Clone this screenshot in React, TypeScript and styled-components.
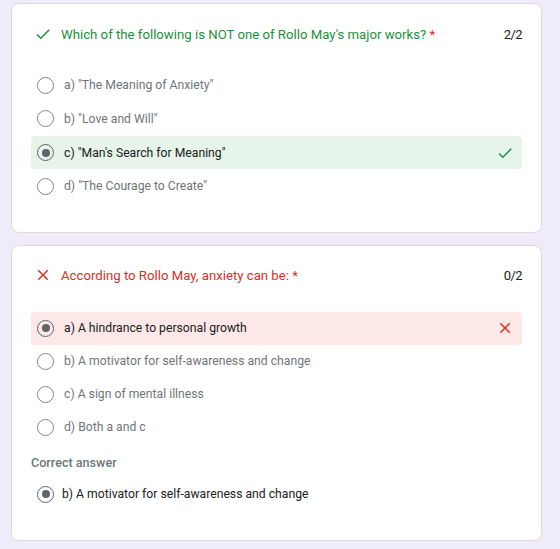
import styled, { createGlobalStyle } from "styled-components";

interface Option {
    label: string;
    chosen?: boolean;
}

interface Question {
    title: string;
    score: string;
    correct: boolean;
    options: Option[];
    answer?: string;
}

const questions: Question[] = [
    {
        title: "Which of the following is NOT one of Rollo May's major works?",
        score: "2/2",
        correct: true,
        options: [
            { label: 'a) "The Meaning of Anxiety"' },
            { label: 'b) "Love and Will"' },
            { label: 'c) "Man\'s Search for Meaning"', chosen: true },
            { label: 'd) "The Courage to Create"' },
        ],
    },
    {
        title: "According to Rollo May, anxiety can be:",
        score: "0/2",
        correct: false,
        options: [
            { label: "a) A hindrance to personal growth", chosen: true },
            { label: "b) A motivator for self-awareness and change" },
            { label: "c) A sign of mental illness" },
            { label: "d) Both a and c" },
        ],
        answer: "b) A motivator for self-awareness and change",
    },
];

const GREEN = "#1e8e3e";
const RED = "#d93025";

function CheckIcon({ size = 18 }: { size?: number }) {
    return (
        <svg width={size} height={size} viewBox="0 0 24 24">
            <path
                d="M9 16.17 4.83 12l-1.42 1.41L9 19 21 7l-1.41-1.41z"
                fill={GREEN}
            />
        </svg>
    );
}

function CrossIcon({ size = 18 }: { size?: number }) {
    return (
        <svg width={size} height={size} viewBox="0 0 24 24">
            <path
                d="M19 6.41 17.59 5 12 10.59 6.41 5 5 6.41 10.59 12 5 17.59 6.41 19 12 13.41 17.59 19 19 17.59 13.41 12z"
                fill={RED}
            />
        </svg>
    );
}

function App() {
    return (
        <>
            <GlobalStyle />
            <Page>
                {questions.map((q) => (
                    <Card key={q.title} $top={q.correct ? 20 : 19}>
                        <Header $space={q.correct ? 24.5 : 26.5}>
                            <HeaderIcon>
                                {q.correct ? <CheckIcon /> : <CrossIcon />}
                            </HeaderIcon>
                            <Title $correct={q.correct}>
                                {q.title} <Required>*</Required>
                            </Title>
                            <Score>{q.score}</Score>
                        </Header>
                        <OptionList $gap={q.correct ? 0.75 : 0}>
                            {q.options.map((o) => (
                                <Row
                                    key={o.label}
                                    $tone={
                                        o.chosen
                                            ? q.correct
                                                ? "good"
                                                : "bad"
                                            : undefined
                                    }
                                >
                                    <Radio $on={o.chosen} />
                                    <OptionText $on={o.chosen}>
                                        {o.label}
                                    </OptionText>
                                    {o.chosen && (
                                        <RowMark>
                                            {q.correct ? (
                                                <CheckIcon />
                                            ) : (
                                                <CrossIcon />
                                            )}
                                        </RowMark>
                                    )}
                                </Row>
                            ))}
                        </OptionList>
                        {q.answer && (
                            <>
                                <AnswerLabel>Correct answer</AnswerLabel>
                                <Row>
                                    <Radio $on />
                                    <OptionText $on $tight>
                                        {q.answer}
                                    </OptionText>
                                </Row>
                            </>
                        )}
                    </Card>
                ))}
            </Page>
        </>
    );
}

const GlobalStyle = createGlobalStyle`
    body {
        margin: 0;
        background: #f0ebf8;
        font-family: Roboto, "Liberation Sans", Arial, sans-serif;
    }
`;
const Page = styled.div`
    display: flex;
    flex-direction: column;
    gap: 12px;
    padding: 3px 18px 9px 11px;
`;
const Card = styled.div<{ $top: number }>`
    background: #fff;
    border: 1px solid #dadce0;
    border-radius: 8px;
    padding: ${(p) => p.$top}px 19px 29.5px 19px;
`;
const Header = styled.div<{ $space: number }>`
    display: flex;
    align-items: center;
    height: 20px;
    margin-bottom: ${(p) => p.$space}px;
    padding-left: 3px;
`;
const HeaderIcon = styled.span`
    display: flex;
    width: 18px;
    margin-right: 9px;
`;
const Title = styled.div<{ $correct: boolean }>`
    flex: 1;
    font-size: 13.2px;
    color: ${(p) => (p.$correct ? GREEN : RED)};
`;
const Required = styled.span`
    color: ${RED};
`;
const Score = styled.span`
    font-size: 13px;
    letter-spacing: -0.6px;
    color: #202124;
`;
const OptionList = styled.div<{ $gap: number }>`
    display: flex;
    flex-direction: column;
    gap: ${(p) => p.$gap}px;
`;
const Row = styled.div<{ $tone?: "good" | "bad" }>`
    display: flex;
    align-items: center;
    height: 33px;
    padding: 0 8px 0 6px;
    border-radius: 4px;
    background: ${(p) =>
        p.$tone === "good"
            ? "#e6f4ea"
            : p.$tone === "bad"
            ? "#fce8e6"
            : "transparent"};
`;
const Radio = styled.span<{ $on?: boolean }>`
    box-sizing: border-box;
    width: 17px;
    height: 17px;
    border-radius: 50%;
    border: 1.5px solid ${(p) => (p.$on ? "#5f6368" : "#80868b")};
    margin-right: 10px;
    display: flex;
    align-items: center;
    justify-content: center;
    &::after {
        content: "";
        display: ${(p) => (p.$on ? "block" : "none")};
        width: 8px;
        height: 8px;
        border-radius: 50%;
        background: #5f6368;
    }
`;
const OptionText = styled.span<{ $on?: boolean; $tight?: boolean }>`
    flex: 1;
    font-size: 12.2px;
    margin-left: ${(p) => (p.$tight ? -2 : 0)}px;
    color: ${(p) => (p.$on ? "#202124" : "#70757a")};
`;
const RowMark = styled.span`
    display: flex;
`;
const AnswerLabel = styled.div`
    font-size: 12.6px;
    line-height: 14px;
    font-weight: 500;
    color: #70757a;
    margin: 12px 0 8px;
`;

export default App;
